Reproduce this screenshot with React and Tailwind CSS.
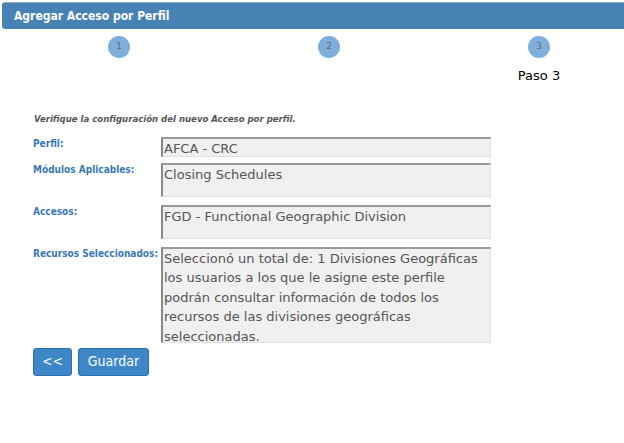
import React from "react";

const font = { fontFamily: '"DejaVu Sans", Verdana, sans-serif' };

function Circle({ n }) {
  return (
    <div className="flex h-[22px] w-[22px] shrink-0 items-center justify-center rounded-full bg-[#7eaedc] text-[9px] text-[#6b6b6b]">
      {n}
    </div>
  );
}

function Field({ label, h, children }) {
  return (
    <div className="flex">
      <div className="w-[128px] text-[10px] leading-[13px] font-bold text-[#3a78b4] [font-family:'DejaVu_Sans_Condensed','DejaVu_Sans',sans-serif]">
        {label}
      </div>
      <div
        className={`w-[330px] border-t-2 border-l-2 border-r border-b border-t-[#999] border-l-[#888] border-r-[#e0e0e0] border-b-[#e0e0e0] bg-[#f0f0f0] px-[1px] text-[13px] leading-[19.5px] text-[#555] [font-family:'DejaVu_Sans',sans-serif] ${h}`}
      >
        {children}
      </div>
    </div>
  );
}

export default function App() {
  return (
    <div className="h-[443px] w-[624px] overflow-hidden bg-white" style={font}>
      <div className="pt-[2px] pl-[2px]">
        <div className="flex h-[27px] items-center rounded-l-[3px] border-t border-[#9ab] bg-[#4682b4] pl-[12px] text-[12px] font-bold text-white [font-family:'DejaVu_Sans_Condensed','DejaVu_Sans',sans-serif]">
          Agregar Acceso por Perfil
        </div>
      </div>
      <div className="mt-[7px] flex items-start gap-[188px] pl-[108px]">
        <Circle n="1" />
        <Circle n="2" />
        <div className="flex w-[22px] flex-col items-center">
          <Circle n="3" />
          <div className="mt-[8px] whitespace-nowrap text-[13px] text-black [font-family:'DejaVu_Sans',sans-serif]">
            Paso 3
          </div>
        </div>
      </div>
      <div className="mt-[26px] pl-[34px] text-[9.5px] font-bold italic text-[#555] [font-family:'DejaVu_Sans_Condensed','DejaVu_Sans',sans-serif]">
        Verifique la configuración del nuevo Acceso por perfil.
      </div>
      <div className="mt-[11px] flex flex-col pl-[33px]">
        <Field label="Perfil:" h="h-[20px] leading-[17px]">
          AFCA - CRC
        </Field>
        <div className="h-[6px]" />
        <Field label="Módulos Aplicables:" h="h-[34px]">
          Closing Schedules
        </Field>
        <div className="h-[8px]" />
        <Field label="Accesos:" h="h-[34px]">
          FGD - Functional Geographic Division
        </Field>
        <div className="h-[8px]" />
        <Field label="Recursos Seleccionados:" h="h-[96px]">
          Seleccionó un total de: 1 Divisiones Geográficas los usuarios a los que le asigne este perfile podrán consultar información de todos los recursos de las divisiones geográficas seleccionadas.
        </Field>
        <div className="mt-[5px] flex gap-[6px]">
          <button className="h-[28px] w-[39px] rounded-[3px] border border-[#2f6fa8] bg-[#3d87c9] text-[14px] text-white [font-family:'DejaVu_Sans_Condensed','DejaVu_Sans',sans-serif]">
            &lt;&lt;
          </button>
          <button className="h-[28px] w-[71px] rounded-[3px] border border-[#2f6fa8] bg-[#3d87c9] text-[14px] text-white [font-family:'DejaVu_Sans_Condensed','DejaVu_Sans',sans-serif]">
            Guardar
          </button>
        </div>
      </div>
    </div>
  );
}
